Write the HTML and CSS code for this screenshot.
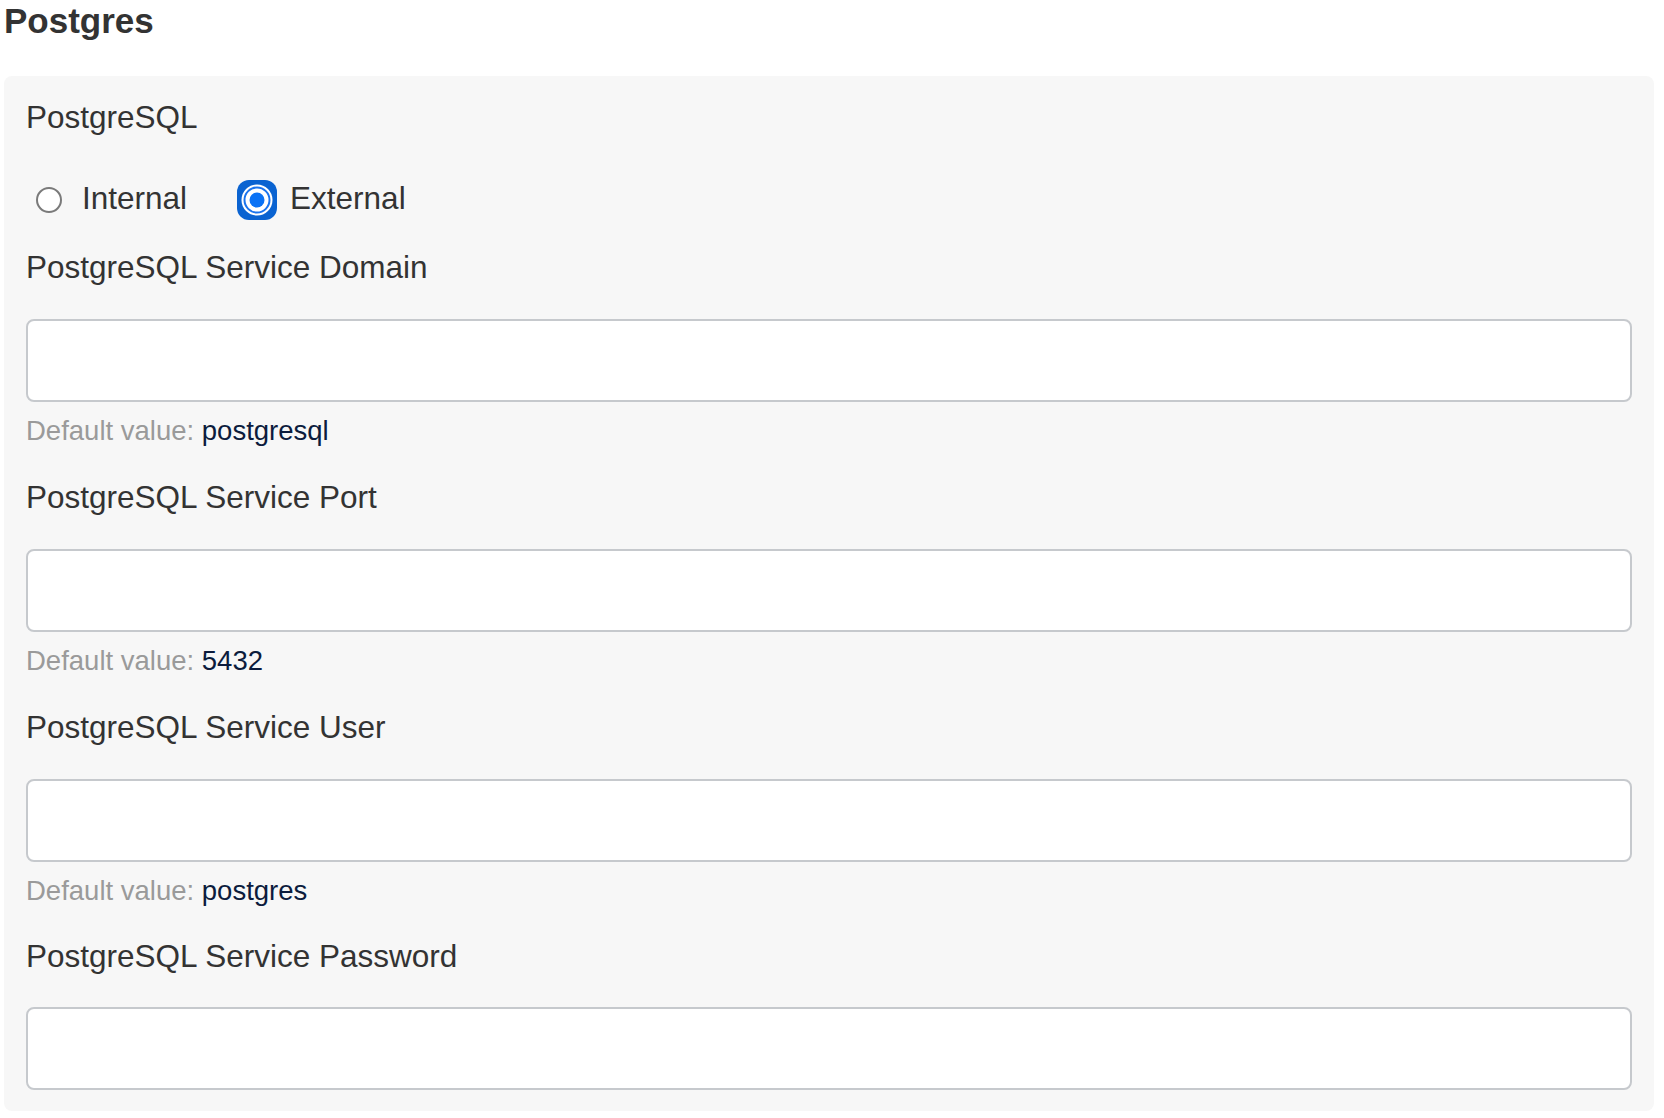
FILE: index.html
```html
<!DOCTYPE html>
<html lang="en">
<head>
<meta charset="utf-8">
<title>Postgres</title>
<link rel="stylesheet" href="styles.css">
</head>
<body>
<div class="page">
  <h1 class="title">Postgres</h1>
  <section class="card">
    <div class="group-label">PostgreSQL</div>
    <div class="radios">
      <label class="radio">
        <span class="radio-circle"></span>
        <span class="radio-text">Internal</span>
      </label>
      <label class="radio radio-checked">
        <svg class="radio-focus" width="40" height="40" viewBox="0 0 40 40">
          <rect x="0" y="0" width="40" height="40" rx="12" ry="12" fill="#0a63d1"/>
          <circle cx="20" cy="20" r="15.5" fill="#ffffff"/>
          <circle cx="20" cy="20" r="12.5" fill="#ffffff" stroke="#1a74ee" stroke-width="2"/>
          <circle cx="20" cy="20" r="7.5" fill="#0a72f5"/>
        </svg>
        <span class="radio-text">External</span>
      </label>
    </div>

    <div class="field">
      <div class="label">PostgreSQL Service Domain</div>
      <input class="input" type="text">
      <div class="help">Default value: <span class="help-value">postgresql</span></div>
    </div>

    <div class="field">
      <div class="label">PostgreSQL Service Port</div>
      <input class="input" type="text">
      <div class="help">Default value: <span class="help-value">5432</span></div>
    </div>

    <div class="field">
      <div class="label">PostgreSQL Service User</div>
      <input class="input" type="text">
      <div class="help">Default value: <span class="help-value">postgres</span></div>
    </div>

    <div class="field field-last">
      <div class="label">PostgreSQL Service Password</div>
      <input class="input" type="password">
    </div>
  </section>
</div>
</body>
</html>
```

FILE: styles.css
```css
* {
  box-sizing: border-box;
}

html, body {
  margin: 0;
  padding: 0;
  background: #ffffff;
}

body {
  font-family: "Liberation Sans", Arial, Helvetica, sans-serif;
  color: #333333;
}

.page {
  padding: 0 10px 0 4px;
}

.title {
  margin: 0;
  padding-top: 1px;
  font-size: 35px;
  line-height: 40px;
  font-weight: 700;
  color: #333333;
}

.card {
  margin-top: 35px;
  background: #f7f7f7;
  border-radius: 8px;
  padding: 21px 22px 21px 22px;
}

.group-label {
  font-size: 31.5px;
  line-height: 40px;
  color: #333333;
}

.radios {
  margin-top: 43px;
  height: 40px;
  display: flex;
  align-items: center;
  padding-left: 10px;
}

.radio {
  display: flex;
  align-items: center;
  gap: 20px;
}

.radio + .radio {
  margin-left: 50px;
}

.radio-circle {
  width: 26px;
  height: 26px;
  border-radius: 50%;
  border: 2px solid #7a7a7a;
  background: #ffffff;
  flex: none;
}

.radio-focus {
  display: block;
  flex: none;
}

.radio-checked {
  gap: 13px;
}

.radio-text {
  font-size: 31.5px;
  line-height: 40px;
  margin-bottom: 5px;
  color: #333333;
}

.field {
  margin-top: 29px;
}

.radios + .field {
  margin-top: 27px;
}

.field-last {
  margin-top: 28px;
}

.label {
  font-size: 31.5px;
  line-height: 40px;
  color: #333333;
}

.input {
  display: block;
  width: 100%;
  height: 83px;
  margin-top: 32px;
  border: 2px solid #c6c9cd;
  border-radius: 8px;
  background: #ffffff;
  outline: none;
  font: inherit;
  padding: 0 16px;
}

.field-last .input {
  margin-top: 31px;
}

.help {
  margin-top: 12px;
  font-size: 27.5px;
  line-height: 34px;
  color: #9a9a9a;
}

.help-value {
  color: #0c1c3d;
}
```
